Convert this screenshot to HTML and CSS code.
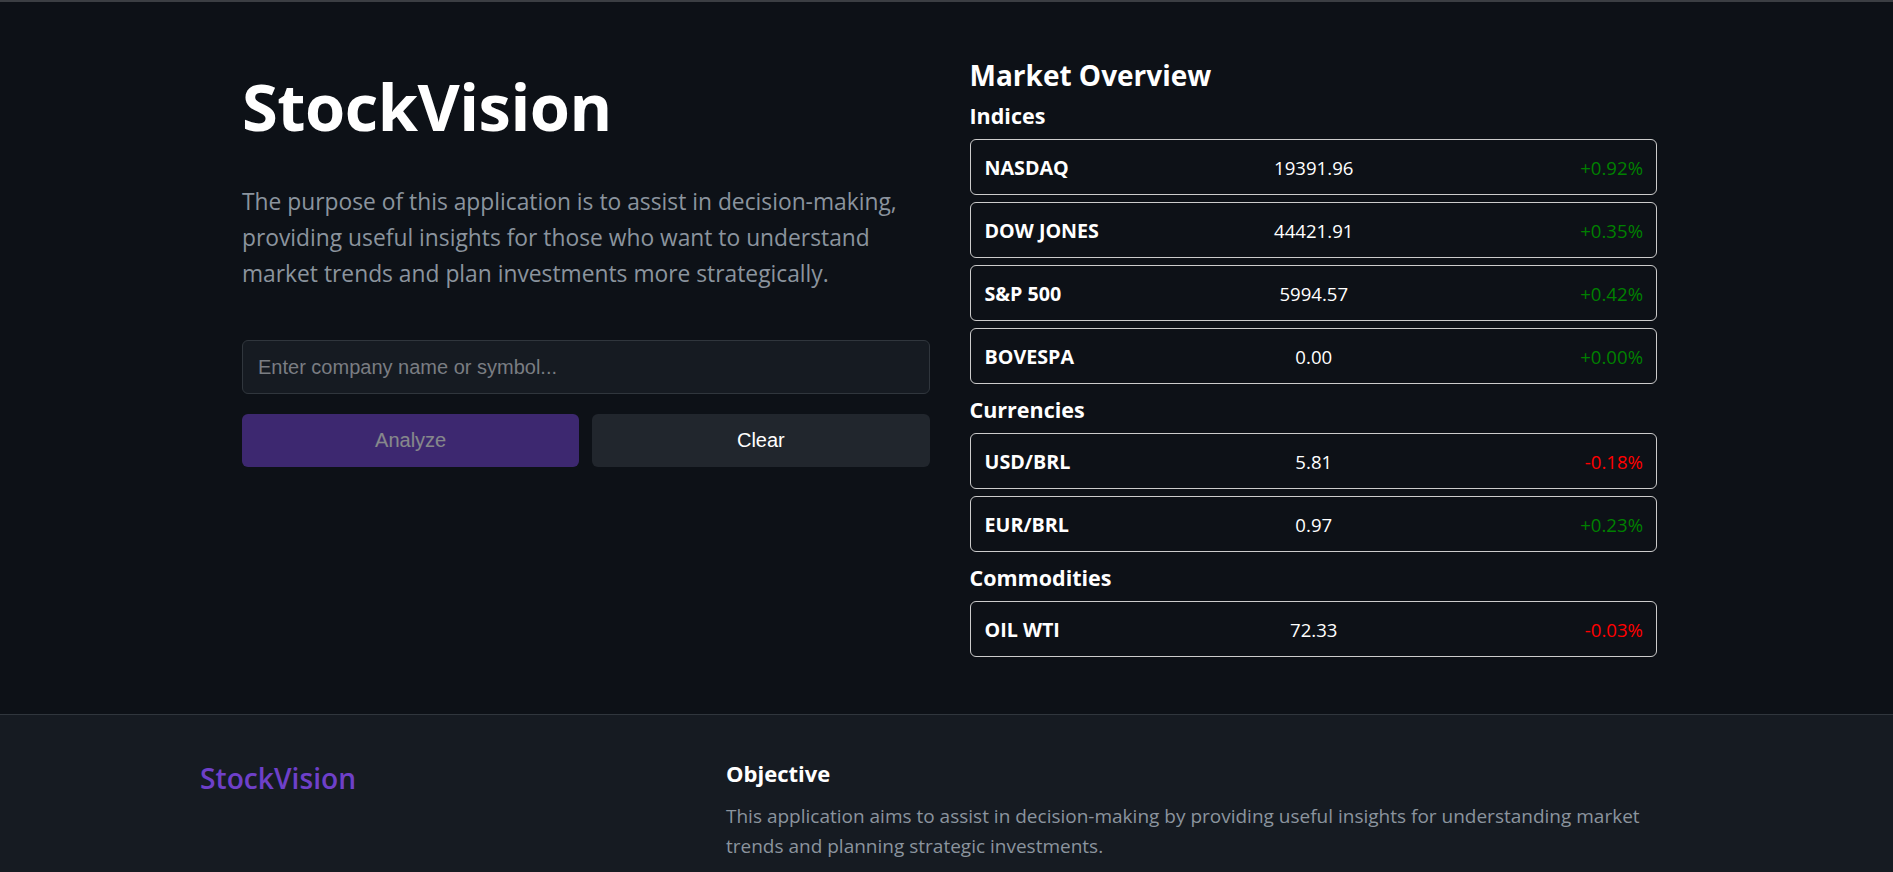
FILE: index.html
```html
<!DOCTYPE html>
<html lang="en">
<head>
<meta charset="utf-8">
<title>StockVision</title>
<link rel="stylesheet" href="styles.css">
</head>
<body>
<main class="hero">
  <section class="intro">
    <h1 class="intro-title">StockVision</h1>
    <p class="intro-text">The purpose of this application is to assist in decision-making, providing useful insights for those who want to understand market trends and plan investments more strategically.</p>
    <input class="search" type="text" placeholder="Enter company name or symbol...">
    <div class="actions">
      <button class="btn btn-primary" disabled>Analyze</button>
      <button class="btn btn-secondary">Clear</button>
    </div>
  </section>
  <section class="market">
    <h2 class="market-title">Market Overview</h2>
    <div class="group">
      <h3 class="group-title">Indices</h3>
      <div class="rows">
        <div class="row"><span class="name">NASDAQ</span><span class="value">19391.96</span><span class="change up">+0.92%</span></div>
        <div class="row"><span class="name">DOW JONES</span><span class="value">44421.91</span><span class="change up">+0.35%</span></div>
        <div class="row"><span class="name">S&amp;P 500</span><span class="value">5994.57</span><span class="change up">+0.42%</span></div>
        <div class="row"><span class="name">BOVESPA</span><span class="value">0.00</span><span class="change up">+0.00%</span></div>
      </div>
    </div>
    <div class="group">
      <h3 class="group-title">Currencies</h3>
      <div class="rows">
        <div class="row"><span class="name">USD/BRL</span><span class="value">5.81</span><span class="change down">-0.18%</span></div>
        <div class="row"><span class="name">EUR/BRL</span><span class="value">0.97</span><span class="change up">+0.23%</span></div>
      </div>
    </div>
    <div class="group">
      <h3 class="group-title">Commodities</h3>
      <div class="rows">
        <div class="row"><span class="name">OIL WTI</span><span class="value">72.33</span><span class="change down">-0.03%</span></div>
      </div>
    </div>
  </section>
</main>
<footer class="footer">
  <div class="footer-brand">StockVision</div>
  <div class="footer-info">
    <h4 class="footer-title">Objective</h4>
    <p class="footer-text">This application aims to assist in decision-making by providing useful insights for understanding market trends and planning strategic investments.</p>
  </div>
</footer>
</body>
</html>
```
FILE: styles.css
```css
* { box-sizing: border-box; }

html, body {
  margin: 0;
  background: #0d1117;
}

body {
  border-top: 2px solid #3b3e43;
  font-family: "Open Sans", "Noto Sans", sans-serif;
  color: #ffffff;
}

.hero {
  display: grid;
  grid-template-columns: 1fr 1fr;
  column-gap: 40px;
  align-items: start;
  padding: 56px 236px 57px 242px;
}

.intro { padding-top: 15px; }

.intro-title {
  margin: 0;
  font-size: 65px;
  line-height: 66px;
  font-weight: 700;
  letter-spacing: -0.5px;
}

.intro-text {
  margin: 45px 0 0;
  max-width: 672px;
  font-size: 22.8px;
  line-height: 36px;
  color: #8b949e;
}

.search {
  display: block;
  width: 100%;
  height: 54px;
  margin-top: 48px;
  padding: 0 15px;
  background: #161b22;
  border: 1px solid #30363d;
  border-radius: 6px;
  color: #ffffff;
  font-family: "Liberation Sans", Arial, sans-serif;
  font-size: 20px;
  outline: none;
}

.search::placeholder { color: #7a7d82; }

.actions {
  display: grid;
  grid-template-columns: 1fr 1fr;
  gap: 13px;
  margin-top: 20px;
}

.btn {
  height: 53px;
  border: none;
  border-radius: 6px;
  font-family: "Liberation Sans", Arial, sans-serif;
  font-size: 20px;
  color: #ffffff;
}

.btn-primary {
  background: #6e40c9;
  opacity: 0.5;
}

.btn-secondary { background: #21262d; }

.market-title {
  margin: 0 0 12px;
  font-size: 28px;
  line-height: 34px;
  font-weight: 700;
}

.group + .group { margin-top: 14px; }

.group-title {
  margin: 0 0 11px;
  font-size: 21.5px;
  line-height: 24px;
  font-weight: 700;
}

.rows {
  display: flex;
  flex-direction: column;
  gap: 7px;
}

.row {
  display: grid;
  grid-template-columns: 1fr 1fr 1fr;
  align-items: center;
  height: 56px;
  padding: 0 13px 0 14px;
  border: 1px solid #cccccc;
  border-radius: 6px;
  font-size: 18.6px;
}

.name {
  font-size: 19.7px;
  font-weight: 700;
}
.value { text-align: center; }
.change { text-align: right; }
.up { color: #008000; }
.down { color: #ff0000; }

.footer {
  display: grid;
  grid-template-columns: 526px 1fr;
  padding: 46px 40px 40px 200px;
  background: #161b22;
  border-top: 1px solid #30363d;
  min-height: 160px;
}

.footer-brand {
  font-size: 28.2px;
  line-height: 34px;
  font-weight: 600;
  color: #6e40c9;
}

.footer-title {
  margin: 0;
  font-size: 22px;
  line-height: 24px;
  font-weight: 700;
}

.footer-text {
  margin: 16px 0 0;
  max-width: 945px;
  font-size: 19px;
  line-height: 30px;
  color: #8b949e;
}
```
